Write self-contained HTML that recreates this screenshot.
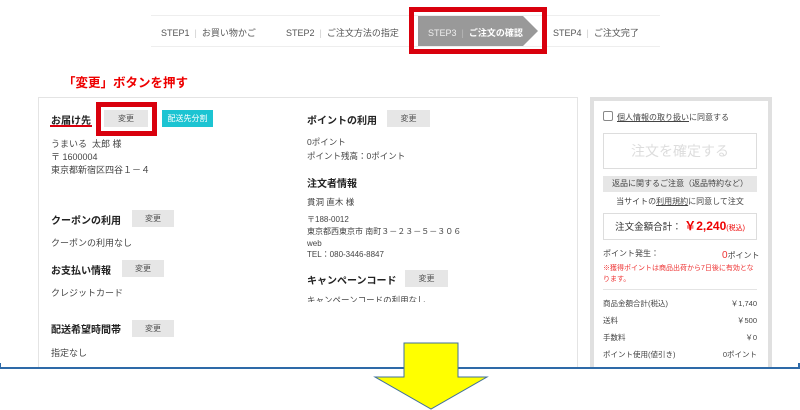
<!DOCTYPE html>
<html><head><meta charset="utf-8"><style>
*{margin:0;padding:0;box-sizing:border-box}
body{width:800px;height:410px;background:#fff;position:relative;overflow:hidden;font-family:"Liberation Sans","Noto Sans CJK JP",sans-serif;color:#333}
.a{position:absolute;white-space:nowrap}
.t{font-size:9px;color:#444}
.h{font-size:10px;font-weight:bold;color:#222}
.b{position:absolute;background:#e6e6e6;font-size:8px;color:#555;text-align:center;line-height:17px;height:17px}
.s{font-size:9px;color:#555}
</style></head><body>
<!-- steps -->
<div class="a" style="left:151px;top:15px;width:509px;height:1px;background:#eee"></div>
<div class="a" style="left:151px;top:46px;width:509px;height:1px;background:#eee"></div>
<div class="a s" style="left:161px;top:26px">STEP1 <span style="color:#ccc">&nbsp;|&nbsp;</span> お買い物かご</div>
<div class="a s" style="left:286px;top:26px">STEP2 <span style="color:#ccc">&nbsp;|&nbsp;</span> ご注文方法の指定</div>
<div class="a" style="left:418px;top:16px;width:120px;height:30px;background:#999;clip-path:polygon(0 0,105px 0,120px 50%,105px 100%,0 100%)"></div>
<div class="a" style="left:428px;top:26px;font-size:9px;color:#eee">STEP3 <span style="color:#bbb">&nbsp;|&nbsp;</span> <b style="color:#fff">ご注文の確認</b></div>
<div class="a s" style="left:553px;top:26px">STEP4 <span style="color:#ccc">&nbsp;|&nbsp;</span> ご注文完了</div>
<div class="a" style="left:409px;top:7px;width:138px;height:47px;border:5px solid #d9000d"></div>
<div class="a" style="left:63px;top:72px;font-size:12.5px;font-weight:bold;color:#e00">「変更」ボタンを押す</div>
<!-- left box -->
<div class="a" style="left:38px;top:97px;width:540px;height:280px;border:1px solid #e4e4e4"></div>
<div class="a h" style="left:51px;top:112px">お届け先</div>
<div class="a" style="left:50px;top:125px;width:42px;height:2px;background:#d9000d"></div>
<div class="b" style="left:104px;top:110px;width:44px">変更</div>
<div class="a" style="left:96px;top:102px;width:61px;height:34px;border:5px solid #d9000d"></div>
<div class="b" style="left:162px;top:110px;width:51px;background:#1cc4d2;color:#fff">配送先分割</div>
<div class="a t" style="left:51px;top:138px;line-height:13px">うまいる&nbsp; 太郎 様<br>〒 1600004<br>東京都新宿区四谷１－４</div>
<div class="a h" style="left:51px;top:212px">クーポンの利用</div>
<div class="b" style="left:132px;top:210px;width:42px">変更</div>
<div class="a t" style="left:51px;top:236px">クーポンの利用なし</div>
<div class="a h" style="left:51px;top:262px">お支払い情報</div>
<div class="b" style="left:122px;top:260px;width:42px">変更</div>
<div class="a t" style="left:51px;top:286px">クレジットカード</div>
<div class="a h" style="left:51px;top:321px">配送希望時間帯</div>
<div class="b" style="left:132px;top:320px;width:42px">変更</div>
<div class="a t" style="left:51px;top:346px">指定なし</div>
<!-- middle -->
<div class="a h" style="left:307px;top:112px">ポイントの利用</div>
<div class="b" style="left:387px;top:110px;width:43px">変更</div>
<div class="a" style="left:307px;top:135px;font-size:8.5px;color:#444;line-height:14px">0ポイント<br>ポイント残高：0ポイント</div>
<div class="a h" style="left:307px;top:175px">注文者情報</div>
<div class="a" style="left:307px;top:196px;font-size:8.5px;color:#444">貫洞 直木 様</div>
<div class="a" style="left:307px;top:214px;font-size:8px;color:#444;line-height:11.8px">〒188-0012<br>東京都西東京市 南町３－２３－５－３０６<br>web<br>TEL：080-3446-8847</div>
<div class="a h" style="left:307px;top:272px">キャンペーンコード</div>
<div class="b" style="left:405px;top:270px;width:43px">変更</div>
<div class="a" style="left:307px;top:294px;font-size:8.5px;color:#444;height:8px;overflow:hidden">キャンペーンコードの利用なし</div>
<!-- right -->
<div class="a" style="left:590px;top:97px;width:182px;height:280px;border:4px solid #e0e0e0;border-bottom:none"></div>
<div class="a" style="left:603px;top:111px;width:10px;height:10px;border:1px solid #888;border-radius:2px"></div>
<div class="a" style="left:617px;top:112px;font-size:8px;color:#444"><u>個人情報の取り扱い</u>に同意する</div>
<div class="a" style="left:603px;top:133px;width:154px;height:36px;border:1px solid #ddd;text-align:center;line-height:34px;font-size:14px;color:#ddd">注文を確定する</div>
<div class="a" style="left:603px;top:176px;width:154px;height:16px;background:#e6e6e6;text-align:center;line-height:16px;font-size:8px;color:#444">返品に関するご注意（返品特約など）</div>
<div class="a" style="left:603px;top:196px;width:154px;text-align:center;font-size:8px;color:#444">当サイトの<u>利用規約</u>に同意して注文</div>
<div class="a" style="left:603px;top:213px;width:154px;height:27px;border:1px solid #ddd;text-align:center;line-height:25px;font-size:9.5px;color:#333">注文金額合計： <b style="color:#e00;font-size:12px">￥2,240</b><span style="color:#e00;font-size:7px">(税込)</span></div>
<div class="a" style="left:603px;top:248px;font-size:8px;color:#444">ポイント発生：</div>
<div class="a" style="left:722px;top:250px;font-size:8px;color:#444"><span style="color:#e33;font-size:10px">0</span>ポイント</div>
<div class="a" style="left:603px;top:263px;font-size:7px;color:#e33;line-height:11px;white-space:normal;width:156px">※獲得ポイントは商品出荷から7日後に有効となります。</div>
<div class="a" style="left:603px;top:289px;width:154px;height:1px;background:#e4e4e4"></div>
<div class="a" style="left:603px;top:295px;width:154px;font-size:7.5px;color:#444;line-height:17px">
<div style="display:flex;justify-content:space-between"><span>商品金額合計(税込)</span><span>￥1,740</span></div>
<div style="display:flex;justify-content:space-between"><span>送料</span><span>￥500</span></div>
<div style="display:flex;justify-content:space-between"><span>手数料</span><span>￥0</span></div>
<div style="display:flex;justify-content:space-between"><span>ポイント使用(値引き)</span><span>0ポイント</span></div>
<div style="display:flex;justify-content:space-between;color:#888"><span>送料無料・割引等は計算されます</span><span></span></div>
</div>
<div class="a" style="left:0;top:369px;width:800px;height:41px;background:#fff"></div>
<div class="a" style="left:0;top:367px;width:800px;height:2px;background:#2e6aa8"></div>
<div class="a" style="left:0;top:363px;width:1px;height:5px;background:#2e6aa8"></div>
<div class="a" style="left:798px;top:363px;width:2px;height:5px;background:#2e6aa8"></div>
<svg class="a" style="left:0;top:0" width="800" height="410"><polygon points="404,343 458,343 458,377 487,377 431,409 375,377 404,377" fill="#ffff00" stroke="#41719c" stroke-width="1"/></svg>
</body></html>
